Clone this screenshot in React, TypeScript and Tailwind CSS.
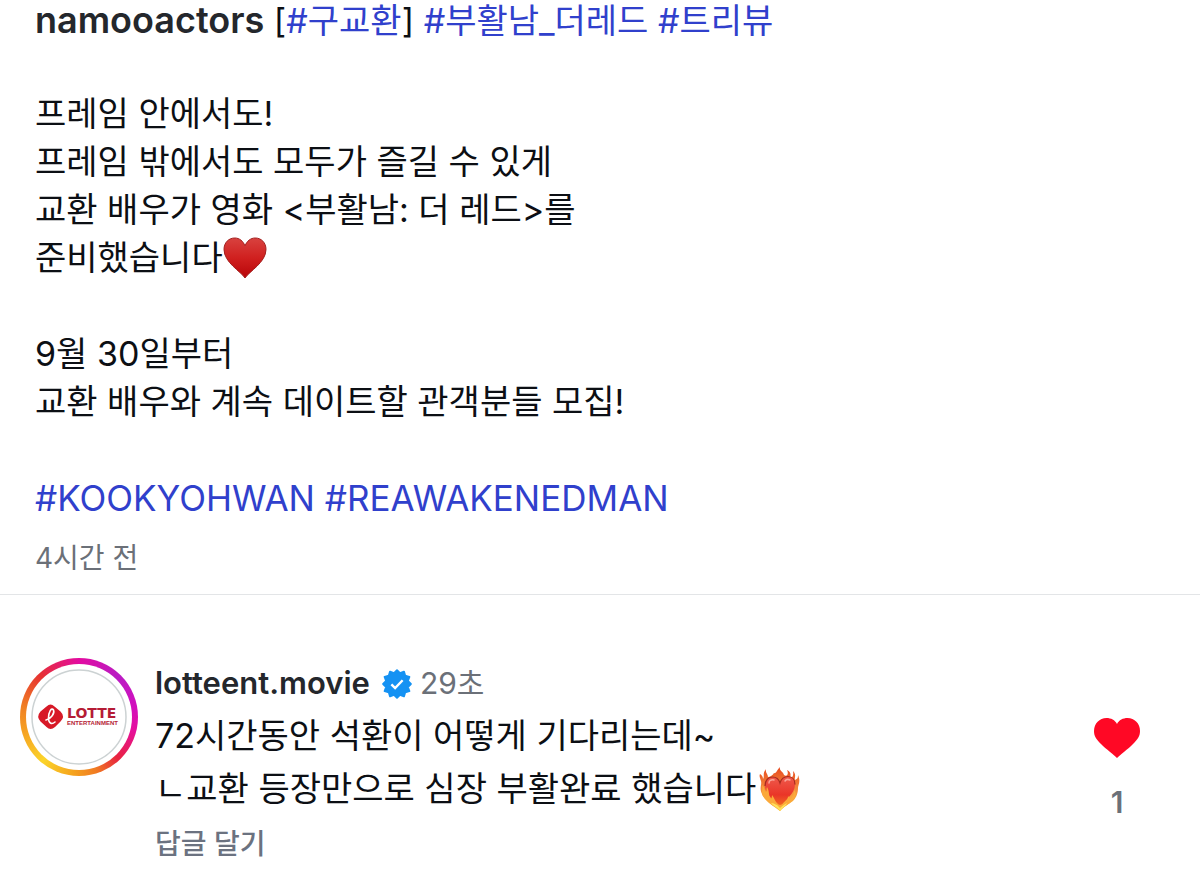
import React, { useState } from "react";

const captionLines = [
  "",
  "프레임 안에서도!",
  "프레임 밖에서도 모두가 즐길 수 있게",
  "교환 배우가 영화 <부활남: 더 레드>를",
];

const HashTag = ({ tag }: { tag: string }) => (
  <a href={`#${tag}`} className="text-[#3040cc]">
    #{tag}
  </a>
);

const RedHeart = () => (
  <svg
    viewBox="0 0 44 42"
    className="inline-block w-11 h-[42px] align-middle"
    role="img"
    aria-label="하트"
  >
    <defs>
      <linearGradient id="redHeart" x1="0" y1="0" x2="0" y2="1">
        <stop offset="0" stopColor="#d8423f" />
        <stop offset="0.5" stopColor="#d0201f" />
        <stop offset="1" stopColor="#b80509" />
      </linearGradient>
    </defs>
    <path
      d="M22 41C18 34.500 1 25.500 1 12.500C1 5.500 5.800 1 11.700 1C16.500 1 20 4 22 8.800C24 4 27.500 1 32.300 1C38.200 1 43 5.500 43 12.500C43 25.500 26 34.500 22 41Z"
      fill="url(#redHeart)"
      stroke="#a3201f"
      strokeWidth="1"
    />
  </svg>
);

const FireHeart = () => (
  <svg
    viewBox="0 0 44 46"
    className="inline-block w-11 h-[46px] ml-0.5 align-middle"
    role="img"
    aria-label="불타는 하트"
  >
    <defs>
      <linearGradient id="flame" x1="0" y1="0" x2="0" y2="1">
        <stop offset="0" stopColor="#e8481f" />
        <stop offset="0.45" stopColor="#f2853a" />
        <stop offset="1" stopColor="#ffc93c" />
      </linearGradient>
      <linearGradient id="fireCore" x1="0" y1="0" x2="0" y2="1">
        <stop offset="0" stopColor="#ee5a4c" />
        <stop offset="0.6" stopColor="#ea3528" />
        <stop offset="1" stopColor="#f2701f" />
      </linearGradient>
    </defs>
    <path
      d="M22 45C17 40 7 36 4 28C1 22 4 19 3 15C2 12 1 10 2 8C4 9 5 11 5 13C7 10 4 8 8 3C7 7 10 8 10 11C12 11 15 9 16 7C18 8 19 4 22 1C21 5 25 5 26 9C29 11 31 8 29 4C33 6 33 9 32 12C34 12 36 10 35 5C39 9 36 12 37 14C40 13 40 11 40 9C43 16 40 19 40 22C40 26 39 31 35 35C30 39 26 40 22 45Z"
      fill="url(#flame)"
    />
    <path
      d="M22 41C18 36 7 29 7 20C7 14 10.500 11 14.500 11C18 11 21 13.500 22 17C23 13.500 26 10.500 30 10.500C34.500 10.500 37 14 37 18.500C37 28 26 35 22 41Z"
      fill="url(#fireCore)"
    />
    <path
      d="M7 20C7 14 10.500 11 14.500 11C18 11 21 13.500 22 17C23 13.500 26 10.500 30 10.500C34.500 10.500 37 14 37 18.500"
      fill="none"
      stroke="#a92a20"
      strokeWidth="1.200"
    />
    <path
      d="M22 45C16 40 9 37 5 30C3 26 5 23 4 19C7 21 6 24 8 26C9 24 8 23 9 21C12 26 10 29 13 33C14 31 14 30 14 29C17 33 18 38 22 39C27 38 30 34 30 30C32 32 31 33 32 34C35 30 36 28 36 24C39 27 38 30 36 33C32 38 26 40 22 45Z"
      fill="#fba93a"
    />
    <path
      d="M22 45C19 41 15 40 13 37C16 37 18 39 19 39C20 40 21 41 22 42C24 40 26 39 29 37C28 40 25 41 22 45Z"
      fill="#ffe25a"
    />
    <path
      d="M11 17C11 14.500 13 13.500 16 14"
      fill="none"
      stroke="#f9a79c"
      strokeWidth="1.500"
      strokeLinecap="round"
    />
    <path
      d="M27 15C28 13.500 30 13 32 14"
      fill="none"
      stroke="#f9a79c"
      strokeWidth="1.500"
      strokeLinecap="round"
    />
  </svg>
);

const VerifiedBadge = () => (
  <svg viewBox="0 0 40 40" className="w-[30px] h-[30px]" role="img" aria-label="인증됨">
    <path
      d="M20 1.500L24 5.500L29.300 3.500L31 8.900L36.500 10.500L34.500 16L38.500 20L34.500 24L36.500 29.500L31 31.100L29.300 36.500L24 34.500L20 38.500L16 34.500L10.700 36.500L9 31.100L3.500 29.500L5.500 24L1.500 20L5.500 16L3.500 10.500L9 8.900L10.700 3.500L16 5.500Z"
      fill="#1592f3"
      stroke="#1592f3"
      strokeWidth="2.500"
      strokeLinejoin="round"
    />
    <path
      d="M12.500 20.500L17.500 25.500L27.500 15"
      fill="none"
      stroke="#fff"
      strokeWidth="3.200"
    />
  </svg>
);

const Avatar = () => (
  <a
    href="#lotteent.movie"
    aria-label="lotteent.movie"
    className="shrink-0 w-[118px] h-[118px] rounded-full p-1.5 bg-[conic-gradient(#e30ba0,#b91cc4_12%,#d20fbd_22%,#e6109a_29%,#e8243f_38%,#f07a22_45%,#f5a51e_52%,#fbd42a_61%,#f6a623_70%,#f07f24_78%,#e63232_88%,#e30ba0)]"
  >
    <span className="flex w-full h-full rounded-full bg-white p-[5px]">
      <svg viewBox="0 0 96 96" className="w-full h-full">
        <circle cx="48" cy="48" r="47" fill="#fff" stroke="#ccd2d3" strokeWidth="1.500" />
        <path
          d="M15.500 37.500Q19.500 33.500 23.500 37.500L29.500 42.500Q34.500 47.500 29.500 52.500L24 58Q19.500 62 15.500 58L9.500 52.500Q5 47.500 9.500 42.500Z"
          fill="#d71927"
        />
        <path
          d="M15 51C20 50 24 44 22.500 41C20.500 38 17.500 43 17.500 49C17.500 54 20.500 56 24 53"
          fill="none"
          stroke="#fff"
          strokeWidth="1.600"
          strokeLinecap="round"
        />
        <text x="36" y="49" fontSize="14" className="font-['DejaVu_Sans'] font-bold" fill="#b51c35">
          LOTTE
        </text>
        <text x="36" y="56" fontSize="6" className="font-['Liberation_Sans'] font-bold" fill="#b51c35">
          ENTERTAINMENT
        </text>
      </svg>
    </span>
  </a>
);

const Caption = () => (
  <section className="px-[35px] pb-4 border-b border-[#e3e5e7]">
    <div className="text-[34px] leading-[48px]">
      <p className="h-[42px] leading-10">
        <a href="#namooactors" className="text-[36px] font-semibold text-[#24272c]">
          namooactors
        </a>{" "}
        [<HashTag tag="구교환" />] <HashTag tag="부활남_더레드" />{" "}
        <HashTag tag="트리뷰" />
      </p>
      {captionLines.map((line, i) => (
        <p key={i} className="min-h-12">
          {line}
        </p>
      ))}
      <p className="flex items-center h-12">
        준비했습니다
        <RedHeart />
      </p>
      <p className="mt-12">9월 30일부터</p>
      <p>교환 배우와 계속 데이트할 관객분들 모집!</p>
      <p className="mt-12 text-[35px]">
        <HashTag tag="KOOKYOHWAN" /> <HashTag tag="REAWAKENEDMAN" />
      </p>
    </div>
    <time className="block mt-4 text-[28px] leading-10 text-[#6b7078]">4시간 전</time>
  </section>
);

const Comment = () => {
  const [liked, setLiked] = useState(true);

  return (
    <article className="flex items-start pl-5 pr-[35px] pt-[63px]">
      <Avatar />
      <div className="flex-1 min-w-0 ml-[17px]">
        <div className="flex items-center h-[51px] text-[31px]">
          <a href="#lotteent.movie" className="font-semibold text-[#24272c]">
            lotteent.movie
          </a>
          <span className="ml-3 mr-2">
            <VerifiedBadge />
          </span>
          <time className="text-[30px] text-[#6b7078]">29초</time>
        </div>
        <p className="text-[34px] leading-[53px]">72시간동안 석환이 어떻게 기다리는데~</p>
        <p className="flex items-center h-[53px] text-[34px]">
          ㄴ교환 등장만으로 심장 부활완료 했습니다
          <FireHeart />
        </p>
        <button className="block mt-1 text-[28px] leading-[50px] font-medium text-[#6b7280]">
          답글 달기
        </button>
      </div>
      <button
        aria-label="좋아요"
        aria-pressed={liked}
        onClick={() => setLiked(!liked)}
        className="flex flex-col items-center w-24 mt-[60px] text-[30px] font-semibold text-[#6b7078]"
      >
        <svg viewBox="0 0 46 40" className="w-[46px] h-10">
          <path
            d="M23 40C20 37 12 31 7 26C2 21 0 18 0 13C0 5.500 5.500 0 12.500 0C17 0 21 2 23 6C25 2 29 0 33.500 0C40.500 0 46 5.500 46 13C46 18 44 21 39 26C34 31 26 37 23 40Z"
            fill={liked ? "#ff0825" : "#c7c9cc"}
          />
        </svg>
        <span className="mt-6 leading-10">1</span>
      </button>
    </article>
  );
};

const App = () => (
  <main
    lang="ko"
    className="min-h-screen overflow-hidden bg-white text-[#0c0f14] font-[Inter,'Noto_Sans_CJK_KR',sans-serif]"
  >
    <Caption />
    <Comment />
  </main>
);

export default App;
